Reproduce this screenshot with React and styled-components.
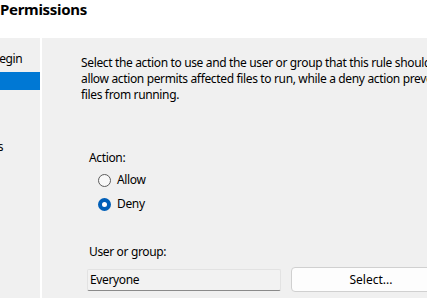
import styled, { createGlobalStyle } from 'styled-components';

const GlobalStyle = createGlobalStyle`
  html, body {
    margin: 0;
    padding: 0;
    background: #ffffff;
  }
  body {
    font-family: "Noto Sans", "Liberation Sans", sans-serif;
    font-size: 12px;
    letter-spacing: -0.35px;
    color: #000000;
  }
`;

const steps = [
  { label: 'Before You Begin', level: 0 },
  { label: 'Permissions', level: 0, active: true },
  { label: 'Conditions', level: 0 },
  { label: 'Path', level: 1 },
  { label: 'Exceptions', level: 1 },
  { label: 'Name', level: 0 },
];

function App() {
  return (
    <Window>
      <GlobalStyle />
      <Header>
        <Title>Permissions</Title>
      </Header>
      <Body>
        <Sidebar>
          <StepList>
            {steps.map((s) => (
              <Step key={s.label} $level={s.level} $active={s.active}>
                {s.label}
              </Step>
            ))}
          </StepList>
        </Sidebar>
        <Divider />
        <Content>
          <Description>
            <Line>Select the action to use and the user or group that this rule should apply to. An</Line>
            <Line>allow action permits affected files to run, while a deny action prevents affected</Line>
            <Line>files from running.</Line>
          </Description>
          <Group>
            <Label>Action:</Label>
            <Options>
              <Option>
                <Radio />
                Allow
              </Option>
              <Option>
                <Radio $checked />
                Deny
              </Option>
            </Options>
          </Group>
          <Group>
            <Label>User or group:</Label>
            <Row>
              <TextBox>Everyone</TextBox>
              <Button>Select...</Button>
            </Row>
          </Group>
        </Content>
      </Body>
    </Window>
  );
}

const Window = styled.div`
  width: 427px;
  height: 298px;
  overflow: hidden;
  display: flex;
  flex-direction: column;
`;
const Header = styled.header`
  height: 38px;
  flex: none;
  background: #ffffff;
  display: flex;
  align-items: flex-start;
`;
const Title = styled.h1`
  margin: 0;
  font-size: 15px;
  font-weight: 700;
  letter-spacing: -0.3px;
  line-height: 18px;
  color: #000000;
`;
const Body = styled.div`
  flex: 1;
  display: flex;
  min-height: 0;
`;
const Sidebar = styled.nav`
  width: 40px;
  flex: none;
  background: #f0f0f0;
  overflow: hidden;
`;
const StepList = styled.ul`
  list-style: none;
  margin: 12px 0 0 -73px;
  padding: 0;
  width: 200px;
`;
const Step = styled.li`
  height: 18px;
  line-height: 18px;
  margin-bottom: 4px;
  padding-left: ${(p) => (p.$level ? 19 : 4)}px;
  white-space: nowrap;
  background: ${(p) => (p.$active ? '#0078d4' : 'transparent')};
  color: ${(p) => (p.$active ? '#ffffff' : '#000000')};
`;
const Divider = styled.div`
  width: 2px;
  flex: none;
  background: #ffffff;
`;
const Content = styled.main`
  flex: 1;
  background: #f0f0f0;
  padding: 17px 0 0 39px;
  overflow: hidden;
  display: flex;
  flex-direction: column;
`;
const Description = styled.p`
  margin: 0;
  line-height: 16px;
`;
const Line = styled.span`
  display: block;
  white-space: nowrap;
`;
const Group = styled.section`
  margin-top: 47px;
  padding-left: 8px;
  display: flex;
  flex-direction: column;
  &:nth-of-type(2) {
    margin-top: 32px;
  }
`;
const Label = styled.div`
  line-height: 16px;
`;
const Options = styled.div`
  display: flex;
  flex-direction: column;
  gap: 8px;
  margin-top: 6px;
  padding-left: 9px;
`;
const Option = styled.label`
  display: flex;
  align-items: center;
  gap: 6px;
  line-height: 16px;
`;
const Radio = styled.span`
  box-sizing: border-box;
  width: 13px;
  height: 13px;
  border-radius: 50%;
  flex: none;
  background: ${(p) => (p.$checked ? '#ffffff' : '#f8f8f8')};
  border: ${(p) => (p.$checked ? '4px solid #005fb8' : '1px solid #5c5c5c')};
`;
const Row = styled.div`
  display: flex;
  align-items: center;
  gap: 10px;
  margin-top: 7px;
  margin-left: -2px;
`;
const TextBox = styled.div`
  box-sizing: border-box;
  width: 194px;
  height: 22px;
  flex: none;
  padding: 0 2px;
  line-height: 20px;
  background: #f2f2f2;
  border: 1px solid #e2e2e2;
  border-bottom-color: #8a8a8a;
  border-radius: 2px;
`;
const Button = styled.button`
  box-sizing: border-box;
  width: 160px;
  height: 25px;
  flex: none;
  font: inherit;
  color: #000000;
  background: #fdfdfd;
  border: 1px solid #d0d0d0;
  border-radius: 4px;
`;

export default App;
